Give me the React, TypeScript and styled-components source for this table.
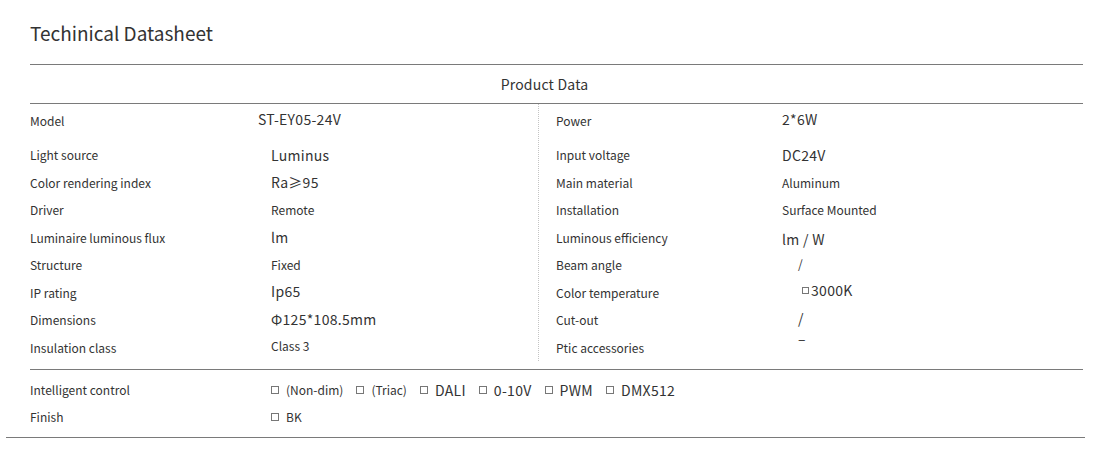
import React from "react";
import styled, { createGlobalStyle } from "styled-components";

const GlobalStyle = createGlobalStyle`
  body {
    margin: 0;
    background: #ffffff;
    font-family: "Noto Sans CJK SC", "Noto Sans", sans-serif;
    color: #333333;
  }
`;

const Page = styled.div`
  width: 1114px;
  height: 457px;
  overflow: hidden;
`;

const Sheet = styled.div`
  margin-left: 30px;
  width: 1053px;
`;

const Title = styled.h2`
  margin: 0;
  height: 65px;
  display: flex;
  align-items: center;
  padding-left: 0;
  font-size: 19px;
  font-weight: 400;
  color: #333;
  border-bottom: 1px solid #7a7a7a;
  box-sizing: border-box;
`;

const SectionHead = styled.div`
  height: 39px;
  display: flex;
  align-items: center;
  justify-content: center;
  padding-right: 24px;
  font-size: 14px;
  letter-spacing: 0.2px;
  color: #333;
  border-bottom: 1px solid #7a7a7a;
  box-sizing: border-box;
`;

const Halves = styled.div`
  display: grid;
  grid-template-columns: 508px 1fr;
  padding-bottom: 8px;
  border-bottom: 1px solid #7a7a7a;
`;

const Half = styled.div<{ $right?: boolean }>`
  display: flex;
  flex-direction: column;
  padding-left: ${(p) => (p.$right ? "17px" : "0")};
  border-left: ${(p) => (p.$right ? "1px dotted #c4c4c4" : "none")};
`;

const Row = styled.div<{ $first?: boolean; $label: number }>`
  display: grid;
  grid-template-columns: ${(p) => p.$label}px 1fr;
  align-items: center;
  box-sizing: border-box;
  height: ${(p) => (p.$first ? "37px" : "27.5px")};
  padding-bottom: ${(p) => (p.$first ? "4px" : "0")};
`;

const Label = styled.span`
  font-size: 12px;
  color: #333;
  white-space: nowrap;
`;

const Value = styled.span<{ $big?: boolean; $indent?: number; $shift?: number }>`
  display: flex;
  align-items: center;
  font-size: ${(p) => (p.$big ? "14px" : "12px")};
  letter-spacing: ${(p) => (p.$big ? "0.3px" : "0")};
  padding-left: ${(p) => p.$indent ?? 0}px;
  position: relative;
  top: ${(p) => p.$shift ?? 0}px;
  color: #333;
  white-space: nowrap;
`;

const Box = styled.span<{ $tight?: boolean }>`
  display: inline-block;
  width: ${(p) => (p.$tight ? "5px" : "6px")};
  height: ${(p) => (p.$tight ? "5px" : "6px")};
  border: 1px solid #777;
  margin-right: ${(p) => (p.$tight ? "2px" : "7px")};
  flex-shrink: 0;
`;

const Extras = styled.div`
  padding: 6px 0 7px;
`;

const ExtraRow = styled.div`
  display: grid;
  grid-template-columns: 241px 1fr;
  align-items: center;
  height: 27px;
`;

const Options = styled.div`
  display: flex;
  align-items: center;
  gap: 13px;
`;

const Option = styled.span<{ $big?: boolean }>`
  display: inline-flex;
  align-items: center;
  font-size: ${(p) => (p.$big ? "14px" : "12px")};
  letter-spacing: ${(p) => (p.$big ? "0.3px" : "0")};
  color: #333;
`;

const BottomRule = styled.div`
  margin: 0 29px 0 6px;
  border-top: 1px solid #7a7a7a;
`;

type Item = { label: string; value: React.ReactNode; big?: boolean; indent?: number; shift?: number };

const left: Item[] = [
  { label: "Model", value: "ST-EY05-24V", big: true, indent: 0, shift: -2 },
  { label: "Light source", value: "Luminus", big: true, indent: 13 },
  { label: "Color rendering index", value: "Ra≥95", big: true, indent: 13 },
  { label: "Driver", value: "Remote", indent: 13 },
  { label: "Luminaire luminous flux", value: "lm", big: true, indent: 13 },
  { label: "Structure", value: "Fixed", indent: 13 },
  { label: "IP rating", value: "Ip65", big: true, indent: 13, shift: -1 },
  { label: "Dimensions", value: "Φ125*108.5mm", big: true, indent: 13, shift: -1 },
  { label: "Insulation class", value: "Class 3", indent: 13, shift: -2 },
];

const right: Item[] = [
  { label: "Power", value: "2*6W", big: true, shift: -2 },
  { label: "Input voltage", value: "DC24V", big: true },
  { label: "Main material", value: "Aluminum" },
  { label: "Installation", value: "Surface Mounted" },
  { label: "Luminous efficiency", value: "lm / W", big: true, shift: 2 },
  { label: "Beam angle", value: "/", indent: 16, shift: -1 },
  { label: "Color temperature", value: <><Box $tight />3000K</>, big: true, indent: 20, shift: -2 },
  { label: "Cut-out", value: "/", big: true, indent: 16, shift: -2 },
  { label: "Ptic accessories", value: "–", big: true, indent: 16, shift: -9 },
];

const Column: React.FC<{ items: Item[]; right?: boolean }> = ({ items, right }) => (
  <Half $right={right}>
    {items.map((it, i) => (
      <Row key={it.label} $first={i === 0} $label={right ? 226 : 228}>
        <Label>{it.label}</Label>
        <Value $big={it.big} $indent={it.indent} $shift={it.shift}>
          {it.value}
        </Value>
      </Row>
    ))}
  </Half>
);

const controls = [
  { text: "(Non-dim)" },
  { text: "(Triac)" },
  { text: "DALI", big: true },
  { text: "0-10V", big: true },
  { text: "PWM", big: true },
  { text: "DMX512", big: true },
];

export default function App() {
  return (
    <Page>
      <GlobalStyle />
      <Sheet>
        <Title>Techinical Datasheet</Title>
        <SectionHead>Product Data</SectionHead>
        <Halves>
          <Column items={left} />
          <Column items={right} right />
        </Halves>
        <Extras>
          <ExtraRow>
            <Label>Intelligent control</Label>
            <Options>
              {controls.map((c) => (
                <Option key={c.text} $big={c.big}>
                  <Box />
                  {c.text}
                </Option>
              ))}
            </Options>
          </ExtraRow>
          <ExtraRow>
            <Label>Finish</Label>
            <Options>
              <Option>
                <Box />
                BK
              </Option>
            </Options>
          </ExtraRow>
        </Extras>
      </Sheet>
      <BottomRule />
    </Page>
  );
}
